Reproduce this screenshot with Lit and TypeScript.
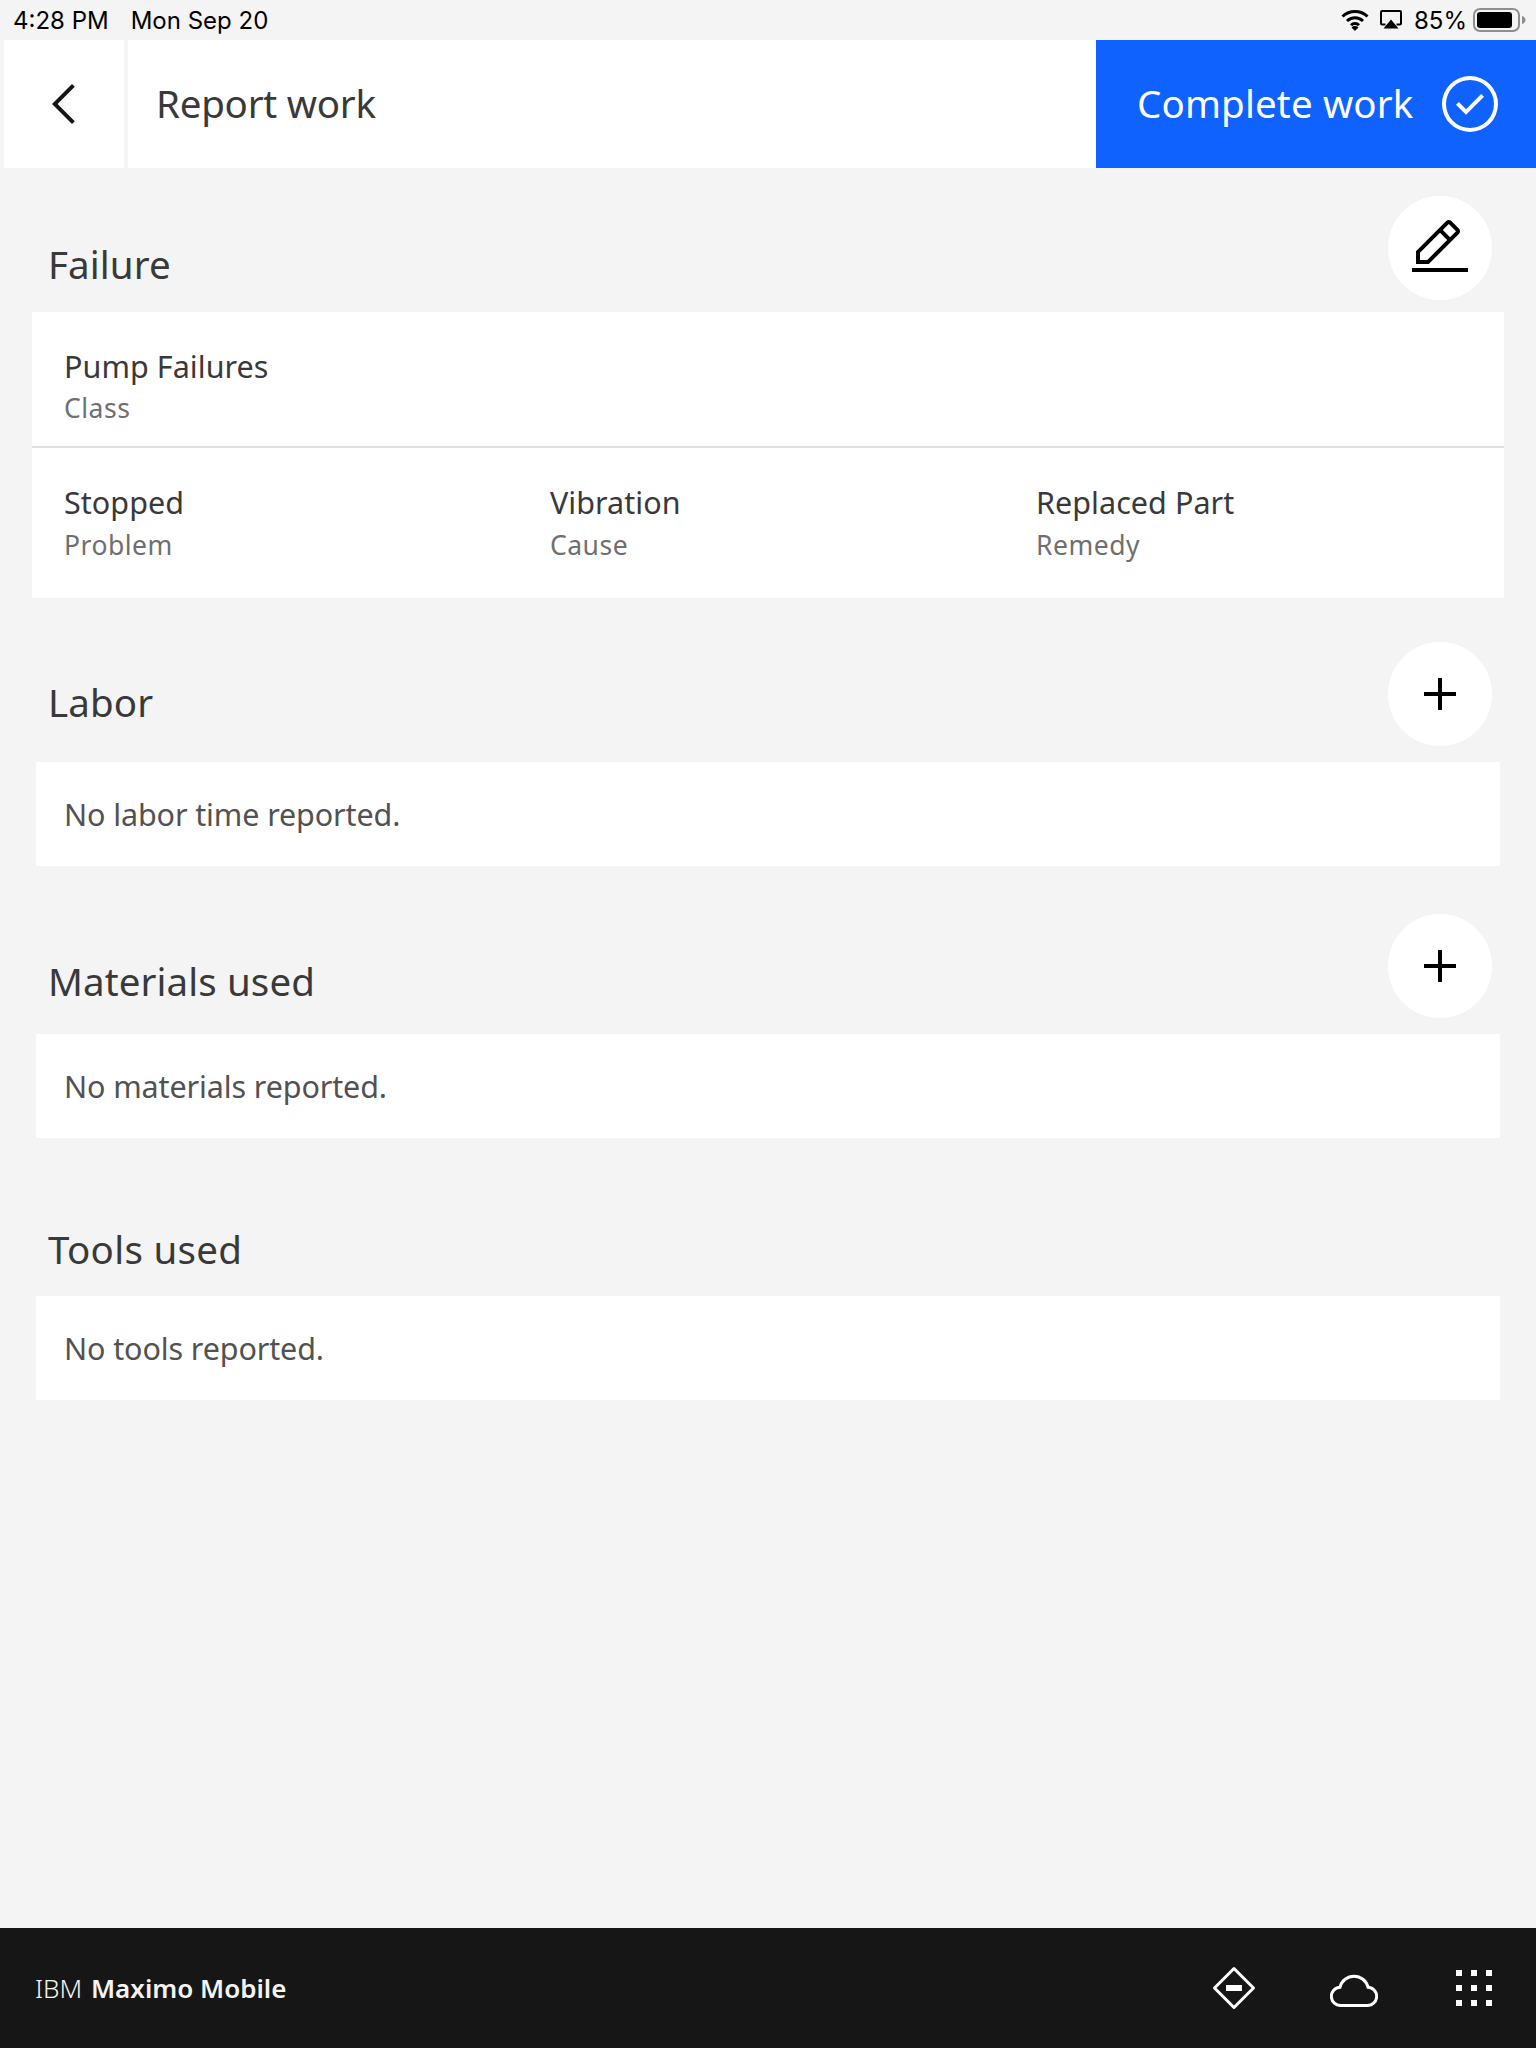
import { LitElement, html, css, svg } from "lit";
import { customElement } from "lit/decorators.js";

const editIcon = svg`<path d="M2 26h28v2H2zM25.4 9c.8-.8.8-2 0-2.8l-3.6-3.6c-.8-.8-2-.8-2.8 0l-15 15V24h6.4L25.4 9zM20.4 4L24 7.6l-3 3L17.4 7 20.4 4zM6 22v-3.6l10-10 3.6 3.6-10 10H6z"/>`;
const addIcon = svg`<path d="M17 15V8h-2v7H8v2h7v7h2v-7h7v-2z"/>`;
const checkIcon = svg`<path d="M14 21.414L9 16.413 10.413 15 14 18.586 21.585 11 23 12.415 14 21.414z"/><path d="M16 2a14 14 0 1014 14A14 14 0 0016 2zm0 26a12 12 0 1112-12 12 12 0 01-12 12z"/>`;
const backIcon = svg`<path d="M10 16L20 6l1.4 1.4L12.8 16l8.6 8.6L20 26z"/>`;

@customElement("app-root")
export class AppRoot extends LitElement {
  static styles = css`
    :host { display: flex; flex-direction: column; height: 2048px; background: #f4f4f4; font-family: "Noto Sans", sans-serif; color: #393939; }
    .status { height: 40px; display: flex; align-items: center; padding: 0 9px 0 13px; font-family: Inter, sans-serif; font-size: 24px; color: #000; box-sizing: border-box; }
    .status .date { margin-left: 22px; }
    .status .right { margin-left: auto; display: flex; align-items: center; }
    .pct { margin: 0 6px 0 12px; }
    .wifi { margin-right: 11px; }
    .header { height: 128px; display: flex; gap: 4px; padding-left: 4px; }
    .back { width: 120px; background: #fff; display: flex; align-items: center; justify-content: center; }
    .title { flex: 1; background: #fff; display: flex; align-items: center; padding: 0 0 2px 28px; font-size: 38.5px; margin-right: -4px; letter-spacing: -0.25px; }
    .complete { width: 440px; box-sizing: border-box; background: #0f62fe; color: #fff; display: flex; align-items: center; justify-content: space-between; padding: 0 34px 0 41px; font-size: 38.5px; letter-spacing: 0.15px; }
    .complete span { padding-bottom: 2px; }
    svg.ic { width: 64px; height: 64px; display: block; fill: currentColor; flex: none; }
    .back svg { color: #161616; }
    .sec-head { display: flex; justify-content: space-between; padding: 0 44px 0 48px; height: 104px; }
    .sec-head h2 { margin: 0; font-weight: 400; font-size: 38.5px; line-height: 50px; align-self: flex-end; letter-spacing: 0.1px; }
    .round { width: 104px; height: 104px; border-radius: 50%; background: #fff; display: flex; align-items: center; justify-content: center; color: #000; }
    .failure { margin-top: 28px; }
    .failure h2 { margin-bottom: 11px; }
    .labor { margin-top: 44px; }
    .labor h2 { margin-bottom: 19px; }
    .materials { margin-top: 48px; }
    .materials h2 { margin-bottom: 12px; }
    .tools { margin-top: 38px; }
    .tools h2 { margin-bottom: 6px; }
    .tools h2 { letter-spacing: 0.3px; }
    .failure-card { margin: 12px 32px 0; background: #fff; }
    .row1 { height: 134px; box-sizing: border-box; padding: 32px 32px 0; }
    .divider { height: 2px; background: #e0e0e0; }
    .row2 { height: 150px; box-sizing: border-box; padding: 32px 0 0 32px; display: grid; grid-template-columns: repeat(3, 486px); }
    .val { font-size: 30.5px; line-height: 44px; letter-spacing: 0.05px; }
    .lbl { font-size: 26.5px; line-height: 38px; color: #6f6f6f; letter-spacing: 0.5px; margin-top: 1px; }
    .row2 .lbl { margin-top: 2px; }
    .empty { margin: 16px 36px 0; height: 104px; background: #fff; display: flex; align-items: center; padding-left: 28px; font-size: 30.5px; color: #525252; letter-spacing: -0.12px; }
    .footer { margin-top: auto; height: 120px; background: #161616; display: flex; align-items: center; padding-left: 35px; color: #f4f4f4; font-size: 26px; }
    .brand b { font-weight: 600; margin-left: 2px; }
    .brand span { font-weight: 300; }
    .actions { margin-left: auto; display: flex; align-items: center; padding-right: 44px; color: #fff; }
    .diamond { width: 44px; height: 44px; display: block; margin-right: 74px; }
    .cloud { width: 48px; height: 35px; display: block; margin-right: 78px; margin-top: 2px; }
    .grid { display: grid; grid-template-columns: repeat(3, 6px); grid-auto-rows: 6px; gap: 9px; }
    .grid i { background: #fff; display: block; }
  `;

  private row(title: string, cls: string, icon: unknown) {
    return html`<div class="sec-head ${cls}">
      <h2>${title}</h2>
      ${icon ? html`<div class="round"><svg class="ic" viewBox="0 0 32 32">${icon}</svg></div>` : ""}
    </div>`;
  }

  render() {
    return html`
      <div class="status">
        <span>4:28 PM</span><span class="date">Mon Sep 20</span>
        <div class="right">
          <svg class="wifi" width="28" height="22" viewBox="0 0 28 22"><path d="M1.500 7.500a18 18 0 0 1 25 0M6 12a11.500 11.500 0 0 1 16 0M10 16.200a5.600 5.600 0 0 1 8 0" fill="none" stroke="#000" stroke-width="3"/><path d="M14 22l-3.500-3.600a5 5 0 0 1 7 0z"/></svg>
          <svg width="22" height="20" viewBox="0 0 22 20"><path d="M5.500 14.500H2a1 1 0 0 1-1-1V2a1 1 0 0 1 1-1h18a1 1 0 0 1 1 1v11.500a1 1 0 0 1-1 1h-3.500" fill="none" stroke="#000" stroke-width="2"/><path d="M11 9.500l7.500 9H3.500z"/></svg>
          <span class="pct">85%</span>
          <svg width="54" height="24" viewBox="0 0 54 24"><rect x="1" y="1" width="45" height="22" rx="6" fill="none" stroke="#8e8e8e" stroke-width="2"/><rect x="4" y="4" width="35" height="16" rx="3"/><path d="M49 8c2 .4 3.500 2 3.500 4s-1.500 3.600-3.500 4z" fill="#8e8e8e"/></svg>
        </div>
      </div>
      <div class="header">
        <div class="back"><svg class="ic" viewBox="0 0 32 32">${backIcon}</svg></div>
        <div class="title">Report work</div>
        <div class="complete"><span>Complete work</span><svg class="ic" viewBox="0 0 32 32">${checkIcon}</svg></div>
      </div>

      ${this.row("Failure", "failure", editIcon)}
      <div class="failure-card">
        <div class="row1"><div class="val">Pump Failures</div><div class="lbl">Class</div></div>
        <div class="divider"></div>
        <div class="row2">
          <div><div class="val">Stopped</div><div class="lbl">Problem</div></div>
          <div><div class="val">Vibration</div><div class="lbl">Cause</div></div>
          <div><div class="val">Replaced Part</div><div class="lbl">Remedy</div></div>
        </div>
      </div>

      ${this.row("Labor", "labor", addIcon)}
      <div class="empty">No labor time reported.</div>

      ${this.row("Materials used", "materials", addIcon)}
      <div class="empty">No materials reported.</div>

      ${this.row("Tools used", "tools", null)}
      <div class="empty">No tools reported.</div>

      <div class="footer">
        <div class="brand"><span>IBM</span> <b>Maximo Mobile</b></div>
        <div class="actions">
          <svg class="diamond" viewBox="0 0 44 44"><path d="M22 2.500L41.500 22 22 41.500 2.500 22z" fill="none" stroke="#fff" stroke-width="3" stroke-linejoin="round"/><rect x="14" y="19" width="16" height="6" fill="#fff"/></svg>
          <svg class="cloud" viewBox="0 0 48 35"><path d="M11 33.500H37A9 9 0 0 0 38 15.200 14.400 14.400 0 0 0 10 15.200 9 9 0 0 0 11 33.500Z" fill="none" stroke="#fff" stroke-width="3"/></svg>
          <div class="grid">${Array.from({ length: 9 }, () => html`<i></i>`)}</div>
        </div>
      </div>
    `;
  }
}
